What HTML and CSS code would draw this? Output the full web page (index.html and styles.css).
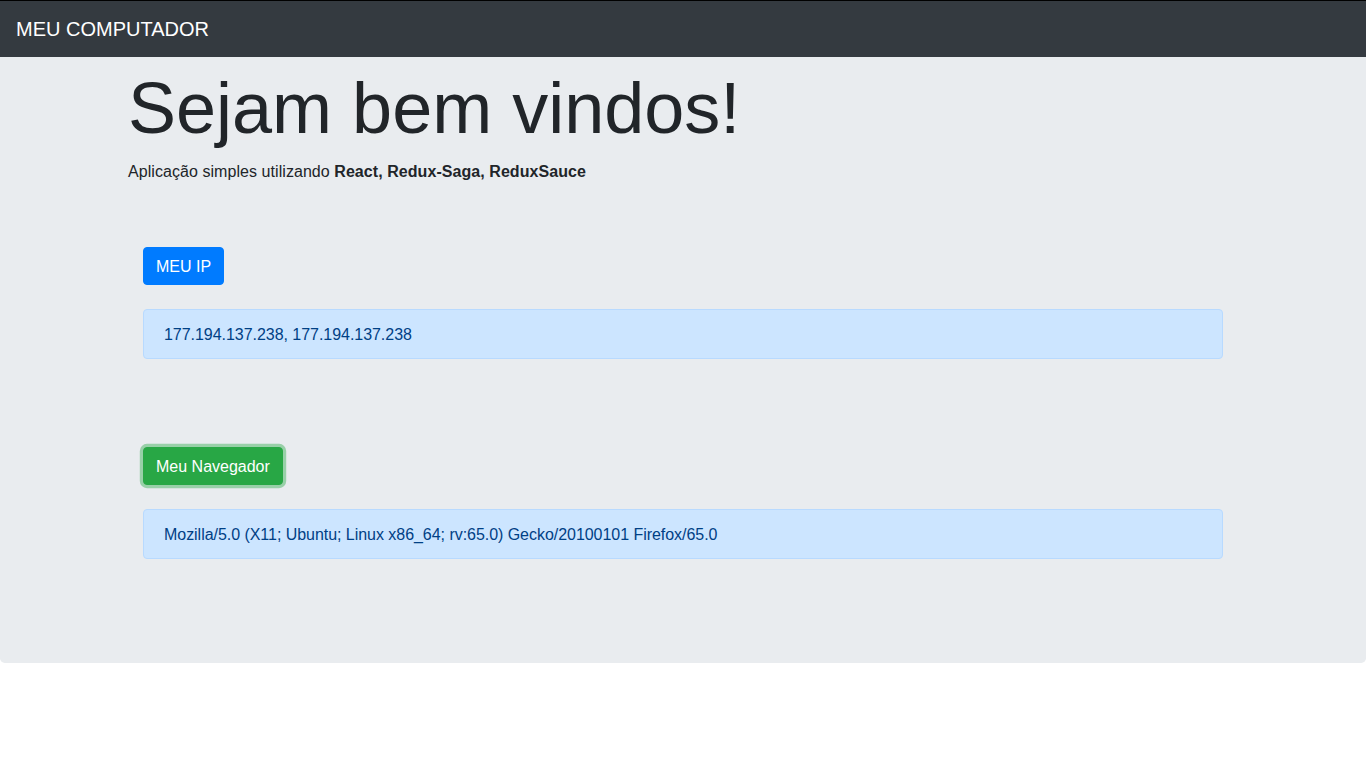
FILE: index.html
```html
<!DOCTYPE html>
<html lang="pt-br">
<head>
<meta charset="utf-8">
<title>Meu Computador</title>
<link rel="stylesheet" href="styles.css">
</head>
<body>
<nav class="navbar">
  <span class="brand">MEU COMPUTADOR</span>
</nav>
<main class="jumbotron">
  <div class="container">
    <h1 class="display">Sejam bem vindos!</h1>
    <p class="lead-text">Aplicação simples utilizando <strong>React, Redux-Saga, ReduxSauce</strong></p>
    <section class="panel">
      <button class="btn btn-primary" type="button">MEU IP</button>
      <div class="alert">177.194.137.238, 177.194.137.238</div>
    </section>
    <section class="panel">
      <button class="btn btn-success focus" type="button">Meu Navegador</button>
      <div class="alert">Mozilla/5.0 (X11; Ubuntu; Linux x86_64; rv:65.0) Gecko/20100101 Firefox/65.0</div>
    </section>
  </div>
</main>
</body>
</html>
```

FILE: styles.css
```css
* { box-sizing: border-box; }

html, body {
  margin: 0;
  padding: 0;
  background: #fff;
}

body {
  font-family: "Liberation Sans", Arial, sans-serif;
  font-size: 16px;
  line-height: 1.5;
  color: #212529;
}

.navbar {
  display: flex;
  align-items: center;
  height: 57px;
  padding: 0 16px;
  background: #343a40;
  border-top: 1px solid #000;
}

.brand {
  color: #fff;
  font-size: 20px;
  line-height: 30px;
}

.jumbotron {
  background: #e9ecef;
  padding: 8px 0 63px;
  border-radius: 0 0 4.8px 4.8px;
}

.container {
  max-width: 1140px;
  margin: 0 auto;
  padding: 0 15px;
  display: flex;
  flex-direction: column;
}

.display {
  font-size: 72px;
  font-weight: 300;
  line-height: 1.2;
  margin: 0 0 9px;
}

.lead-text {
  margin: 0 0 16px;
  letter-spacing: 0.06px;
}

.lead-text strong {
  font-weight: 700;
}

.panel {
  margin-top: 47px;
  padding: 0 15px 25px;
  display: flex;
  flex-direction: column;
  align-items: flex-start;
}

.btn {
  font-family: inherit;
  font-size: 16px;
  line-height: 24px;
  padding: 7px 12px 5px;
  border: 1px solid transparent;
  border-radius: 4px;
  color: #fff;
  cursor: pointer;
  margin-bottom: 24px;
}

.btn-primary {
  background: #007bff;
  border-color: #007bff;
}

.btn-success {
  background: #28a745;
  border-color: #28a745;
}

.btn-success.focus {
  box-shadow: 0 0 0 3.2px rgba(72, 180, 97, 0.5);
}

.alert {
  align-self: stretch;
  padding: 13px 20px 11px;
  margin-bottom: 16px;
  border: 1px solid #b8daff;
  border-radius: 4px;
  background: #cce5ff;
  color: #004085;
  letter-spacing: -0.04px;
}
```
